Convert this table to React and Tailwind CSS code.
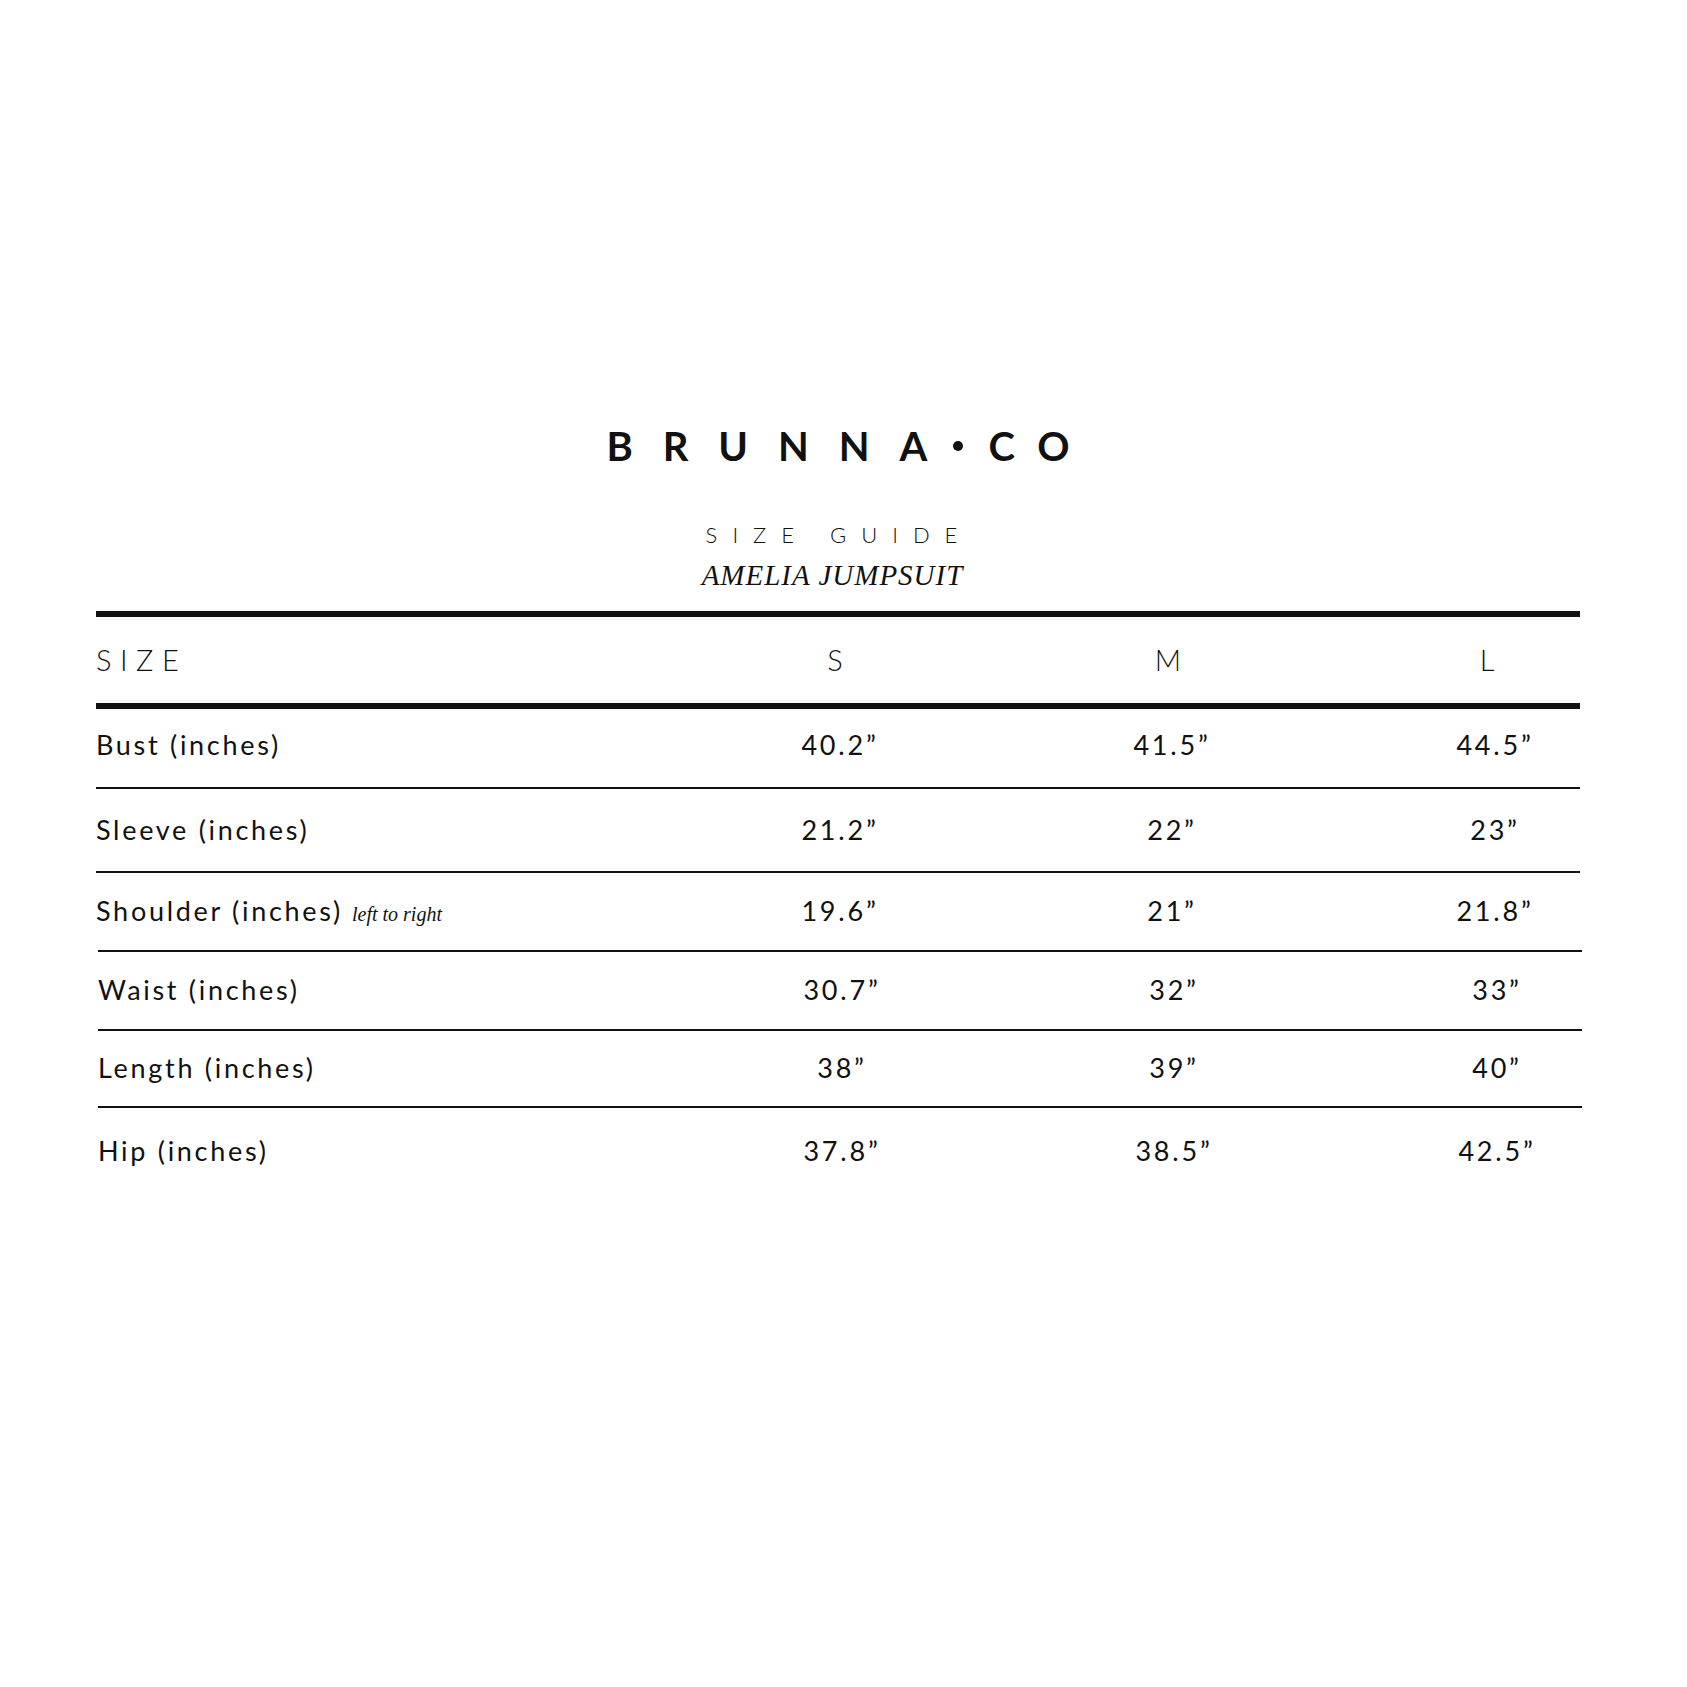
import React from "react";

const rows = [
  { label: "Bust (inches)", s: "40.2”", m: "41.5”", l: "44.5”", h: "h-[78px] pb-[6px]" },
  { label: "Sleeve (inches)", s: "21.2”", m: "22”", l: "23”", h: "h-[82px]" },
  { label: "Shoulder (inches)", note: "left to right", s: "19.6”", m: "21”", l: "21.8”", h: "h-[77px]" },
  { label: "Waist (inches)", s: "30.7”", m: "32”", l: "33”", h: "h-[77px]", shift: true },
  { label: "Length (inches)", s: "38”", m: "39”", l: "40”", h: "h-[75px]", shift: true },
  { label: "Hip (inches)", s: "37.8”", m: "38.5”", l: "42.5”", h: "h-[86px]", shift: true },
];

export default function App() {
  return (
    <div className="w-[1687px] h-[1687px] bg-white text-[#111] font-['Lato','Liberation_Sans',sans-serif]">
      <div className="pt-[424px] flex flex-col items-center">
        <div className="flex items-center h-[44px] leading-[44px] text-[40px] font-bold text-[#111] pr-[11px]">
          <span className="tracking-[30px]">BRUNNA</span>
          <span className="w-[10px] h-[10px] rounded-full bg-[#111] mr-[25px] -ml-[4px]"></span>
          <span className="tracking-[23px] -mr-[23px]">CO</span>
        </div>
        <div className="mt-[55px] h-[24px] leading-[24px] text-[22px] font-light tracking-[15px] pr-[9px]">
          SIZE GUIDE
        </div>
        <div className="mt-[12px] h-[32px] leading-[32px] text-[29px] italic tracking-[1px] pr-[22px] font-['Liberation_Serif',serif]">
          AMELIA JUMPSUIT
        </div>
      </div>
      <div className="ml-[96px] w-[1484px] mt-[20px]">
        <div className="h-[6px] bg-[#111]"></div>
        <div className="grid grid-cols-[574px_330px_336px_244px] items-center h-[86px] text-[29px] font-light">
          <div className="tracking-[8.5px]">SIZE</div>
          <div className="text-center">S</div>
          <div className="text-center">M</div>
          <div className="text-center pl-[58px]">L</div>
        </div>
        <div className="h-[6px] bg-[#111]"></div>
        {rows.map((r, i) => (
          <div key={r.label} className={r.shift ? "ml-[2px] -mr-[2px]" : ""}>
            {i > 0 && <div className="h-[2px] bg-[#111]"></div>}
            <div className={`grid grid-cols-[574px_330px_336px_244px] items-center text-[27px] ${r.h}`}>
              <div className="flex items-baseline tracking-[2.7px]">
                <span>{r.label}</span>
                {r.note && (
                  <span className="ml-[9px] text-[20px] italic tracking-normal font-['Liberation_Serif',serif]">
                    {r.note}
                  </span>
                )}
              </div>
              <div className="text-center pl-[10px] tracking-[2.8px]">{r.s}</div>
              <div className="text-center pl-[8px] tracking-[2.8px]">{r.m}</div>
              <div className="text-center pl-[74px] tracking-[2.8px]">{r.l}</div>
            </div>
          </div>
        ))}
      </div>
    </div>
  );
}
